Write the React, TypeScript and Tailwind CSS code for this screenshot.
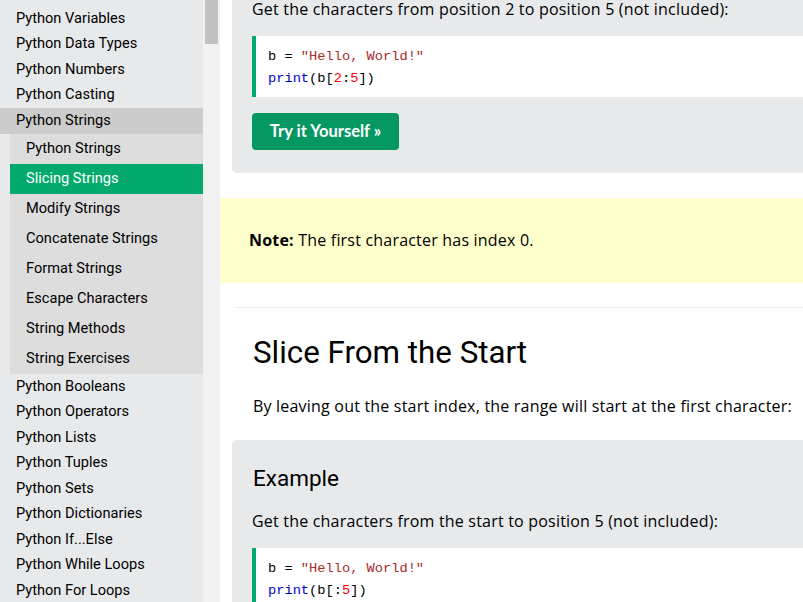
import React from "react";

const topBefore = ["Python Variables", "Python Data Types", "Python Numbers", "Python Casting"];
const subs = [
  "Python Strings",
  "Slicing Strings",
  "Modify Strings",
  "Concatenate Strings",
  "Format Strings",
  "Escape Characters",
  "String Methods",
  "String Exercises",
];
const topAfter = [
  "Python Booleans",
  "Python Operators",
  "Python Lists",
  "Python Tuples",
  "Python Sets",
  "Python Dictionaries",
  "Python If...Else",
  "Python While Loops",
  "Python For Loops",
  "Python Functions",
];

function CodeBox({ slice }: { slice: React.ReactNode }) {
  return (
    <div className="bg-white border-l-4 border-[#04AA6D] pl-3 pt-[10px] pb-[7px] font-['Liberation_Mono',monospace] text-[13.7px] leading-[22px] text-black">
      <div>
        b = <span className="text-[#a52a2a]">"Hello, World!"</span>
      </div>
      <div>
        <span className="text-[#0000cd]">print</span>(b[{slice}])
      </div>
    </div>
  );
}

export default function App() {
  return (
    <div className="w-[803px] h-[602px] overflow-hidden flex bg-white text-black font-['Roboto',sans-serif]">
      {/* Sidebar */}
      <div className="w-[203px] shrink-0 bg-[#e7e9eb] h-full overflow-hidden text-[14.6px]">
        <div className="-mt-[19.5px]">
          <div className="h-[25.5px] flex items-center pl-4">Python Variables Names</div>
          {topBefore.map((t) => (
            <div key={t} className="h-[25.5px] flex items-center pl-4">{t}</div>
          ))}
          <div className="h-[26px] flex items-center pl-4 bg-[#cccccc]">Python Strings</div>
          <div className="ml-[10px] bg-[#dddddd]">
            {subs.map((t) => (
              <div
                key={t}
                className={
                  "h-[30px] flex items-center pl-4 " +
                  (t === "Slicing Strings" ? "bg-[#04AA6D] text-white" : "")
                }
              >
                {t}
              </div>
            ))}
          </div>
          {topAfter.map((t) => (
            <div key={t} className="h-[25.5px] flex items-center pl-4">{t}</div>
          ))}
        </div>
      </div>
      {/* Scrollbar */}
      <div className="w-[17px] shrink-0 bg-[#f1f1f1] h-full px-[2px]">
        <div className="h-[44px] bg-[#c1c1c1]" />
      </div>
      {/* Main */}
      <div className="flex-1 min-w-0 h-full overflow-hidden flex flex-col">
        <div className="shrink-0 ml-[12px] -mr-10 bg-[#e7e9eb] rounded-bl-[5px] px-5 pb-[23px]">
          <p className="-mt-[3px] leading-[24px] font-['Open_Sans',sans-serif] text-[16px] tracking-[0.2px]">
            Get the characters from position 2 to position 5 (not included):
          </p>
          <div className="mt-[15px]">
            <CodeBox
              slice={
                <>
                  <span className="text-[#ff0000]">2</span>:<span className="text-[#ff0000]">5</span>
                </>
              }
            />
          </div>
          <div className="mt-4 w-[147px] h-[37px] rounded-[4px] bg-[#059862] text-white font-bold text-[16.5px] flex items-center justify-center font-['Lato',sans-serif]">
            Try it Yourself »
          </div>
        </div>
        <div className="shrink-0 mt-[25px] h-[85px] bg-[#ffffcc] flex items-center pl-[29px] pb-[1px] font-['Open_Sans',sans-serif] text-[16px] tracking-[0.2px]">
          <p className="leading-[24px]">
            <b>Note:</b> The first character has index 0.
          </p>
        </div>
        <div className="shrink-0 mt-[24px] ml-[14px] h-px bg-[#eeeeee]" />
        <h2 className="shrink-0 ml-[33px] mt-[25px] text-[31.3px] leading-[40px] font-normal">Slice From the Start</h2>
        <p className="shrink-0 ml-[33px] mt-[21px] leading-[24px] font-['Open_Sans',sans-serif] text-[16px] tracking-[0.2px] whitespace-nowrap">
          By leaving out the start index, the range will start at the first character:
        </p>
        <div className="shrink-0 ml-[12px] -mr-10 mt-[22px] bg-[#e7e9eb] rounded-tl-[5px] px-5 pt-[22px] pb-10">
          <h3 className="text-[22.5px] leading-[32px] font-normal pl-px">Example</h3>
          <p className="mt-[15px] leading-[24px] font-['Open_Sans',sans-serif] text-[16px] tracking-[0.2px]">
            Get the characters from the start to position 5 (not included):
          </p>
          <div className="mt-[15px]">
            <CodeBox
              slice={
                <>
                  :<span className="text-[#ff0000]">5</span>
                </>
              }
            />
          </div>
        </div>
      </div>
    </div>
  );
}
